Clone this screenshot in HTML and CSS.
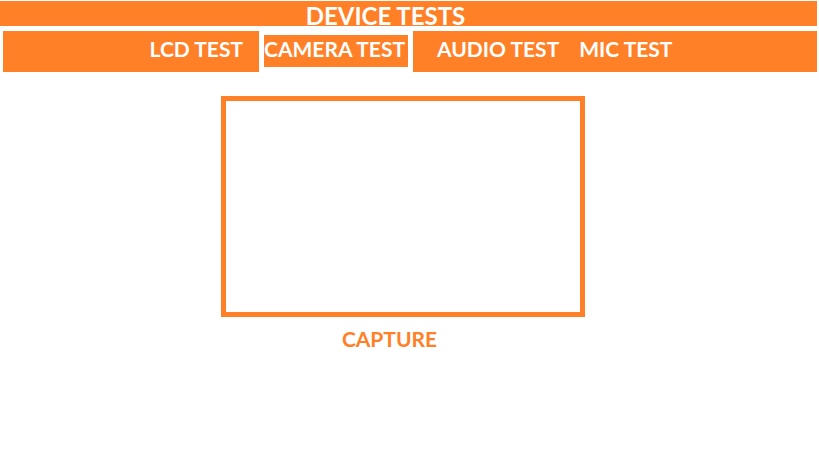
FILE: index.html
```
<!DOCTYPE html>
<html lang="en">
<head>
<meta charset="utf-8">
<meta name="viewport" content="width=device-width, initial-scale=1">
<title>Device Tests</title>
<link rel="stylesheet" href="styles.css">
</head>
<body>
<header class="banner"><h1 class="title">DEVICE TESTS</h1></header>
<nav class="tabs" aria-label="Tests">
<button class="tab" type="button">LCD TEST</button>
<button class="tab tab-active" type="button" aria-current="page">CAMERA TEST</button>
<button class="tab" type="button">AUDIO TEST</button>
<button class="tab" type="button">MIC TEST</button>
</nav>
<main class="camera">
<div class="preview"></div>
<button class="capture" type="button">CAPTURE</button>
</main>
</body>
</html>
```

FILE: styles.css
```
:root {
  --accent: #ff8027;
}

* {
  box-sizing: border-box;
}

body {
  margin: 0;
  padding: 1px 2px 0 0;
  background: #fff;
  font-family: Lato, sans-serif;
  font-weight: 700;
}

button {
  padding: 0;
  border: 0;
  background: none;
  font: inherit;
  cursor: pointer;
}

.banner {
  height: 25px;
  padding-right: 46px;
  background: var(--accent);
  color: #fff;
  text-align: center;
}

.title {
  margin: 0;
  font-size: 24px;
  line-height: 30px;
}

.tabs {
  display: flex;
  justify-content: center;
  height: 41px;
  margin: 5px 0 0 3px;
  padding-left: 2px;
  background: var(--accent);
  font-size: 21px;
  line-height: 28px;
}

.tab {
  display: flex;
  margin-right: 20px;
  padding-top: 4px;
  color: #fff;
  white-space: nowrap;
}

.tab:first-child {
  margin-right: 16px;
}

.tab:last-child {
  margin-right: 0;
}

.tab-active {
  min-width: 154px;
  margin-right: 24px;
  padding: 0;
  border: solid #fff;
  border-width: 4px 5px 5px;
}

.camera {
  display: flex;
  flex-direction: column;
  align-items: center;
  padding-top: 24px;
}

.preview {
  width: 364px;
  max-width: 100%;
  height: 221px;
  margin-right: 12px;
  border: 5px solid var(--accent);
}

.capture {
  margin: 8px 38px 0 0;
  color: var(--accent);
  font-size: 21px;
  line-height: 28px;
}
```
